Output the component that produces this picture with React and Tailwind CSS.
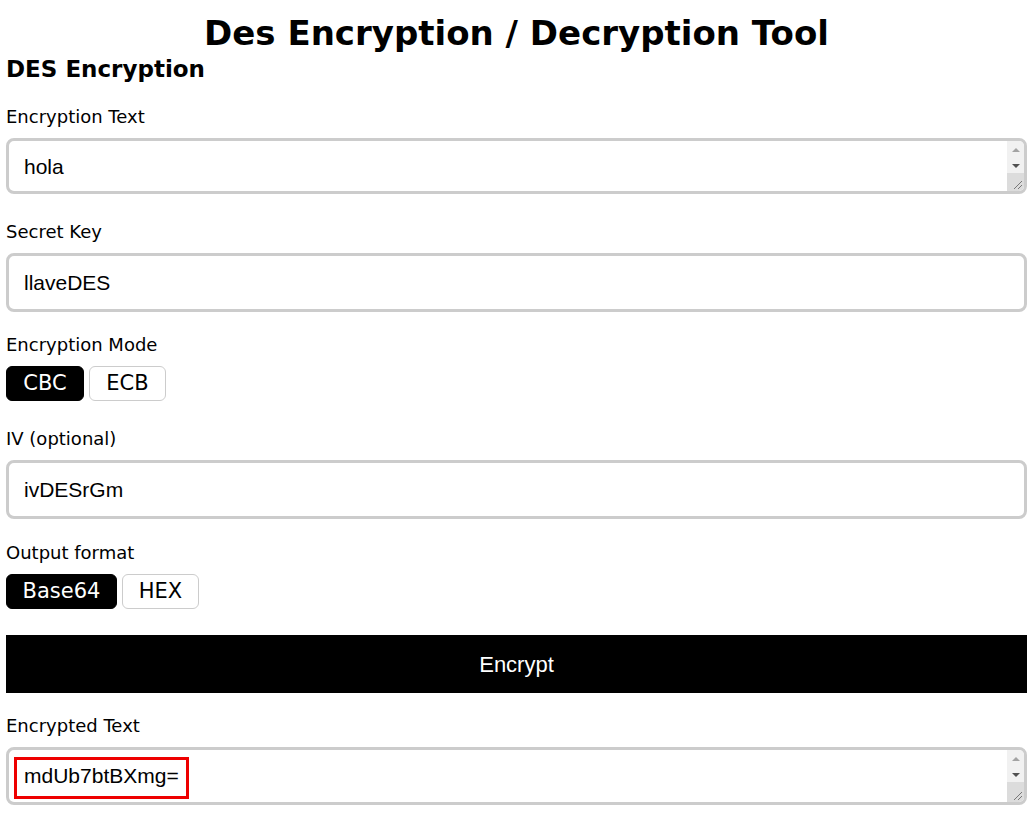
import { useState } from "react";

const heading = { fontFamily: '"DejaVu Sans", "Open Sans", sans-serif' };

function Label({ children, extra = "" }) {
  return (
    <div className={"text-[18px] leading-[22px] text-black mt-[22px] mb-[10px] " + extra} style={heading}>
      {children}
    </div>
  );
}

function Toggle({ options, value, onChange, widths }) {
  return (
    <div className="flex gap-[5px]">
      {options.map((o, i) => (
        <button
          key={o}
          onClick={() => onChange(o)}
          style={heading}
          className={
            "h-[35px] rounded-[6px] text-[21px] border " +
            widths[i] +
            (value === o ? " bg-black text-white border-black" : " bg-white text-black border-[#ccc]")
          }
        >
          {o}
        </button>
      ))}
    </div>
  );
}

// fake classic scrollbar + resizer drawn over a textarea
function ScrollBar() {
  return (
    <div className="absolute right-[3px] top-[3px] bottom-[3px] w-[17px] bg-[#f1f1f1] flex flex-col items-center pointer-events-none rounded-tr-[5px] rounded-br-[5px] overflow-hidden">
      <div className="h-[17px] w-full flex items-center justify-center">
        <div className="w-0 h-0 border-l-[4px] border-r-[4px] border-b-[4px] border-l-transparent border-r-transparent border-b-[#a3a3a3]" />
      </div>
      <div className="h-[15px] w-full flex items-center justify-center">
        <div className="w-0 h-0 border-l-[4px] border-r-[4px] border-t-[4px] border-l-transparent border-r-transparent border-t-[#505050]" />
      </div>
      <div className="flex-1 w-full bg-[#dcdcdc] relative">
        <svg className="absolute right-[2px] bottom-[2px]" width="10" height="10" viewBox="0 0 10 10">
          <line x1="2" y1="10" x2="10" y2="2" stroke="#777" strokeWidth="1" />
          <line x1="6" y1="10" x2="10" y2="6" stroke="#777" strokeWidth="1" />
        </svg>
      </div>
    </div>
  );
}

export default function App() {
  const [mode, setMode] = useState("CBC");
  const [fmt, setFmt] = useState("Base64");

  const field =
    "w-full border-[3px] border-[#ccc] rounded-[8px] px-[15px] text-[21px] text-black outline-none font-['Liberation_Sans',Arial,sans-serif]";

  return (
    <div className="bg-white min-h-screen pl-[6px] pr-[9px]">
      <h1 className="text-center font-bold text-[34px] leading-[66px] -mb-[14px]" style={heading}>
        Des Encryption / Decryption Tool
      </h1>
      <h2 className="font-bold text-[23px] leading-[34px]" style={heading}>
        DES Encryption
      </h2>

      <Label extra="!mt-[20px]">Encryption Text</Label>
      <div className="relative">
        <textarea
          defaultValue="hola"
          rows={1}
          className={field + " h-[56px] py-[10px] overflow-hidden resize-none block"}
        />
        <ScrollBar />
      </div>

      <Label extra="!mt-[27px]">Secret Key</Label>
      <input defaultValue="llaveDES" className={field + " h-[59px] block"} />

      <Label>Encryption Mode</Label>
      <Toggle options={["CBC", "ECB"]} widths={["w-[78px]", "w-[77px]"]} value={mode} onChange={setMode} />

      <Label extra="!mt-[27px]">IV (optional)</Label>
      <input defaultValue="ivDESrGm" className={field + " h-[59px] block"} />

      <Label extra="!mt-[23px]">Output format</Label>
      <Toggle options={["Base64", "HEX"]} widths={["w-[111px]", "w-[77px]"]} value={fmt} onChange={setFmt} />

      <button className="w-full h-[58px] bg-black text-white text-[22px] mt-[26px] block font-['Liberation_Sans',Arial,sans-serif]">
        Encrypt
      </button>

      <Label>Encrypted Text</Label>
      <div className="relative">
        <textarea
          readOnly
          defaultValue="mdUb7btBXmg="
          rows={1}
          className={field + " h-[58px] py-[10px] overflow-hidden resize-none block"}
        />
        <ScrollBar />
        <div className="absolute left-[8px] top-[10px] w-[175px] h-[42px] border-[3px] border-[#e00] pointer-events-none" />
      </div>
    </div>
  );
}
